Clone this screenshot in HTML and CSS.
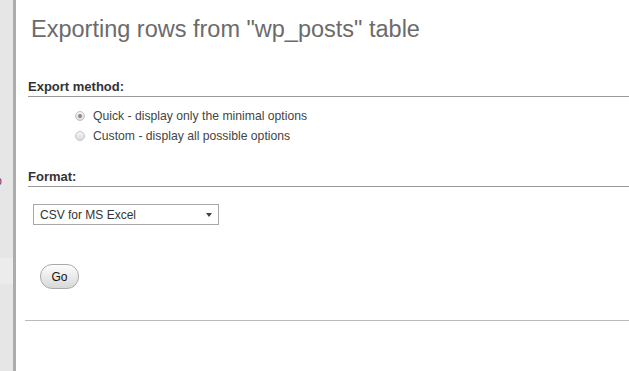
FILE: index.html
```html
<!DOCTYPE html>
<html lang="en">
<head>
    <meta charset="UTF-8">
    <title>Export</title>
    <link rel="stylesheet" href="styles.css">
</head>
<body>
    <aside class="sidebar">
        <span class="side-link">Info</span>
        <div class="side-band"></div>
    </aside>

    <main class="page">
        <h2 class="title">Exporting rows from "wp_posts" table</h2>

        <div class="export-block">
            <h3>Export method:</h3>
            <ul class="options">
                <li><input type="radio" name="method" checked> <label>Quick - display only the minimal options</label></li>
                <li><input type="radio" name="method"> <label>Custom - display all possible options</label></li>
            </ul>
        </div>

        <div class="export-block">
            <h3>Format:</h3>
            <div class="select-wrap">
                <select class="format-select">
                    <option>CSV for MS Excel</option>
                </select>
            </div>
        </div>

        <div class="actions">
            <button class="go-btn">Go</button>
        </div>

        <hr class="bottom-line">
    </main>
</body>
</html>
```

FILE: styles.css
```css
* {
    margin: 0;
    padding: 0;
    box-sizing: border-box;
}

body {
    font-family: "Liberation Sans", Arial, sans-serif;
    display: flex;
    min-height: 100vh;
    background-color: #fff;
    color: #444;
    font-size: 12px;
}

/* barra lateral */
.sidebar {
    width: 16px;
    flex-shrink: 0;
    background-color: #e6e6e6;
    border-right: 3px solid #acacac;
    overflow: hidden;
    padding-top: 173px;
}

.side-link {
    display: block;
    margin-left: -18px;
    color: #7b3a6e;
    font-size: 12px;
    line-height: 16px;
    white-space: nowrap;
}

.side-band {
    margin-top: 69px;
    height: 26px;
    background-color: #ececec;
}

.page {
    flex: 1;
    padding: 15px 0 0 9px;
}

.title {
    font-size: 23.5px;
    font-weight: normal;
    color: #6b6b6b;
    line-height: 28px;
    margin-left: 6px;
    margin-bottom: 36px;
}

.export-block {
    margin-left: 3px;
}

.export-block h3 {
    font-size: 13px;
    font-weight: bold;
    color: #333;
    line-height: 16px;
    border-bottom: 1px solid #999;
    padding-bottom: 1px;
}

.options {
    list-style: none;
    padding: 9px 0 23px 47px;
}

.options li {
    display: flex;
    align-items: center;
    gap: 8px;
    height: 20px;
}

.options input {
    appearance: none;
    width: 10px;
    height: 10px;
    border-radius: 50%;
    border: 1px solid #c4c4c4;
    background: linear-gradient(#f4f4f4, #dcdcdc);
    position: relative;
}

.options input:checked::after {
    content: '';
    position: absolute;
    top: 2px;
    left: 2px;
    width: 4px;
    height: 4px;
    border-radius: 50%;
    background-color: #8a8a8a;
}

.options label {
    color: #444;
    font-size: 12.2px;
}

.select-wrap {
    position: relative;
    width: 186px;
    margin: 17px 0 0 5px;
}

.format-select {
    appearance: none;
    width: 100%;
    height: 21px;
    border: 1px solid #a8a8a8;
    background-color: #fff;
    font-family: inherit;
    font-size: 12px;
    color: #333;
    padding-left: 6px;
}

.select-wrap::after {
    content: '';
    position: absolute;
    right: 7px;
    top: 9px;
    border-left: 3px solid transparent;
    border-right: 3px solid transparent;
    border-top: 4px solid #444;
}

.actions {
    padding: 39px 0 0 15px;
}

.go-btn {
    width: 39px;
    height: 25px;
    border: 1px solid #aaa;
    border-radius: 12px;
    background: linear-gradient(#fdfdfd, #d8d8d8);
    font-family: inherit;
    font-size: 12px;
    color: #111;
}

.bottom-line {
    border: none;
    border-top: 1px solid #bbb;
    margin-top: 31px;
}
```
